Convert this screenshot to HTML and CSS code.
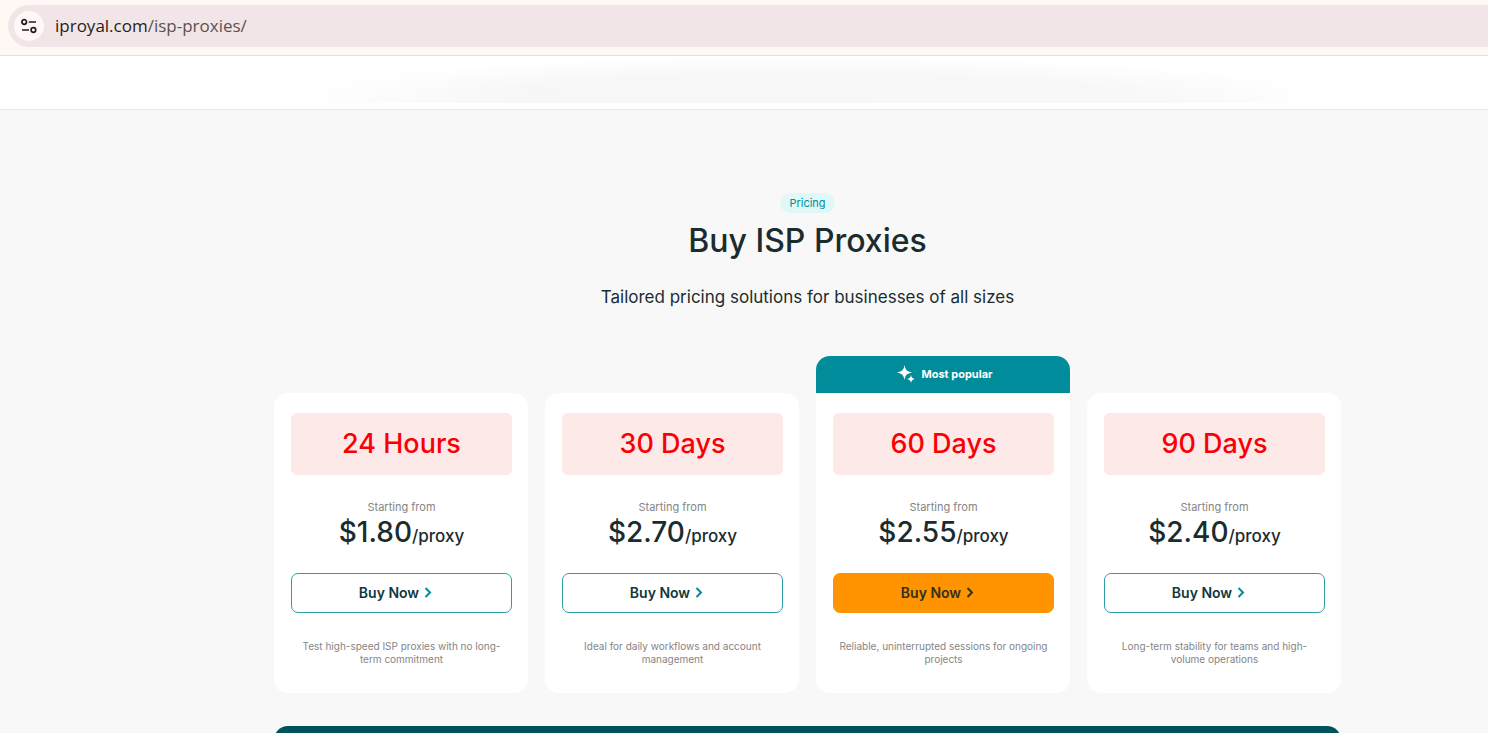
FILE: index.html
```html
<!DOCTYPE html>
<html lang="en">
<head>
<meta charset="utf-8">
<meta name="viewport" content="width=device-width, initial-scale=1">
<title>Buy ISP Proxies</title>
<link rel="stylesheet" href="styles.css">
</head>
<body>

<div class="browser-bar">
  <div class="address">
    <button class="site-info" type="button" aria-label="View site information">
      <svg width="18" height="18" viewBox="0 0 18 18" fill="none" stroke="#251c1c" stroke-width="1.7">
        <circle cx="4.2" cy="5" r="2.3"/>
        <path d="M8.8 5h7.2M2 13h7"/>
        <circle cx="13.4" cy="13" r="2.3"/>
      </svg>
    </button>
    <span class="url">iproyal.com<span class="path">/isp-proxies/</span></span>
  </div>
</div>

<header class="site-header">
  <div class="header-haze"></div>
</header>

<main class="pricing">
  <div class="intro">
    <span class="badge">Pricing</span>
    <h1>Buy ISP Proxies</h1>
    <p>Tailored pricing solutions for businesses of all sizes</p>
  </div>

  <div class="plans">
    <article class="plan">
      <div class="card">
        <h2>24 Hours</h2>
        <p class="from">Starting from</p>
        <p class="price">$1.80<span>/proxy</span></p>
        <button class="buy" type="button">Buy Now
          <svg width="8" height="12" viewBox="0 0 8 12" fill="none" stroke="currentColor" stroke-width="2"><path d="M1.5 2l4.500 4.500-4.500 4.500"/></svg>
        </button>
        <p class="desc">Test high-speed ISP proxies with no long-term commitment</p>
      </div>
    </article>

    <article class="plan">
      <div class="card">
        <h2>30 Days</h2>
        <p class="from">Starting from</p>
        <p class="price">$2.70<span>/proxy</span></p>
        <button class="buy" type="button">Buy Now
          <svg width="8" height="12" viewBox="0 0 8 12" fill="none" stroke="currentColor" stroke-width="2"><path d="M1.5 2l4.500 4.500-4.500 4.500"/></svg>
        </button>
        <p class="desc">Ideal for daily workflows and account management</p>
      </div>
    </article>

    <article class="plan popular">
      <div class="ribbon">
        <svg width="18" height="18" viewBox="0 0 18 18" fill="#fff">
          <path d="M7.500 0c1 5.100 2.300 6.400 7.500 7.500-5.200 1.100-6.500 2.400-7.500 7.500-1-5.100-2.300-6.400-7.500-7.500 5.200-1.100 6.500-2.400 7.500-7.500z"/>
          <path d="M14 10c.7 2.700 1.300 3.300 4 4-2.700.7-3.300 1.300-4 4-.7-2.700-1.300-3.300-4-4 2.700-.7 3.300-1.300 4-4z"/>
        </svg>
        Most popular
      </div>
      <div class="card">
        <h2>60 Days</h2>
        <p class="from">Starting from</p>
        <p class="price">$2.55<span>/proxy</span></p>
        <button class="buy" type="button">Buy Now
          <svg width="8" height="12" viewBox="0 0 8 12" fill="none" stroke="currentColor" stroke-width="2"><path d="M1.5 2l4.500 4.500-4.500 4.500"/></svg>
        </button>
        <p class="desc">Reliable, uninterrupted sessions for ongoing projects</p>
      </div>
    </article>

    <article class="plan">
      <div class="card">
        <h2>90 Days</h2>
        <p class="from">Starting from</p>
        <p class="price">$2.40<span>/proxy</span></p>
        <button class="buy" type="button">Buy Now
          <svg width="8" height="12" viewBox="0 0 8 12" fill="none" stroke="currentColor" stroke-width="2"><path d="M1.5 2l4.500 4.500-4.500 4.500"/></svg>
        </button>
        <p class="desc">Long-term stability for teams and high-volume operations</p>
      </div>
    </article>
  </div>

  <div class="banner"></div>
</main>

</body>
</html>
```

FILE: styles.css
```css
* {
  box-sizing: border-box;
}

html, body {
  height: 100%;
}

body {
  margin: 0;
  display: flex;
  flex-direction: column;
  overflow: hidden;
  background: #f8f8f8;
  color: #1b2c2f;
  font-family: Inter, "Liberation Sans", sans-serif;
}

h1, h2, p {
  margin: 0;
}

button {
  font-family: inherit;
  cursor: pointer;
}

/* browser bar */
.browser-bar {
  flex: none;
  padding: 5px 0 8px 8px;
  background: #fff8f5;
  border-bottom: 1px solid #f1dadd;
}

.address {
  display: flex;
  align-items: center;
  gap: 11px;
  height: 42px;
  padding-left: 6px;
  background: #f2e5e7;
  border-radius: 21px 0 0 21px;
}

.site-info {
  display: flex;
  align-items: center;
  justify-content: center;
  width: 30px;
  height: 30px;
  padding: 0;
  border: 0;
  border-radius: 50%;
  background: #fff8f6;
}

.url {
  font-family: "Open Sans", "Noto Sans", sans-serif;
  font-size: 17px;
  line-height: 24px;
  color: #251c1c;
}

.path {
  color: #5c5152;
}

/* page header */
.site-header {
  flex: none;
  height: 54px;
  padding: 4px 128px 6px 258px;
  background: #fff;
  border-bottom: 1px solid #e8e8e8;
}

.header-haze {
  height: 100%;
  background:
    radial-gradient(ellipse 50% 110% at 50% 100%, transparent 60%, #fff),
    linear-gradient(90deg, #fdfdfd, #fafafa 9%, #f7f7f7 25%, #f8f8f8 90%, #fcfcfc 94%, #fdfdfd);
}

/* pricing */
.pricing {
  flex: 1;
  display: flex;
  flex-direction: column;
  padding: 83px 147px 0 274px;
}

.intro {
  display: flex;
  flex-direction: column;
  align-items: center;
  text-align: center;
}

.badge {
  padding: 0 9px;
  border-radius: 10px;
  background: #e0f8f8;
  color: #008c9a;
  font-size: 11px;
  line-height: 20px;
}

.intro h1 {
  margin-top: 6px;
  font-size: 32px;
  font-weight: 500;
  line-height: 44px;
}

.intro p {
  margin-top: 22px;
  font-size: 17px;
  line-height: 24px;
}

.plans {
  display: grid;
  grid-template-columns: repeat(4, 1fr);
  align-items: end;
  gap: 17px;
  margin-top: 47px;
}

.card {
  padding: 20px 16px 27px 17px;
  border-radius: 14px;
  background: #fff;
  text-align: center;
}

.popular .card {
  border-radius: 0 0 14px 14px;
}

.ribbon {
  display: flex;
  align-items: center;
  justify-content: center;
  gap: 6px;
  height: 37px;
  padding: 0 0 2px 4px;
  border-radius: 14px 14px 0 0;
  background: #008c9a;
  color: #fff;
  font-size: 11px;
  font-weight: 700;
}

.card h2 {
  border-radius: 6px;
  background: #fee9e9;
  color: #f90006;
  font-size: 27px;
  font-weight: 500;
  line-height: 62px;
}

.from {
  margin-top: 25px;
  color: #858585;
  font-size: 11px;
  line-height: 14px;
}

.price {
  font-size: 28px;
  font-weight: 500;
  line-height: 36px;
}

.price span {
  font-size: 17px;
  line-height: 20px;
}

.buy {
  display: flex;
  align-items: center;
  justify-content: center;
  gap: 5px;
  width: 100%;
  height: 40px;
  margin-top: 23px;
  padding: 0 12px 2px 0;
  border: 1px solid #2f9da5;
  border-radius: 7px;
  background: #fff;
  color: #10373d;
  font-size: 14px;
  font-weight: 600;
}

.buy svg {
  color: #008c9a;
}

.popular .buy {
  border-color: #ff9300;
  background: #ff9300;
  color: #33301c;
}

.popular .buy svg {
  color: inherit;
}

.desc {
  margin-top: 27px;
  padding: 0 4px;
  color: #858585;
  font-size: 10px;
  line-height: 13px;
}

.banner {
  flex: 1 0 60px;
  margin-top: 33px;
  border-radius: 14px 14px 0 0;
  background: #00525b;
}
```
